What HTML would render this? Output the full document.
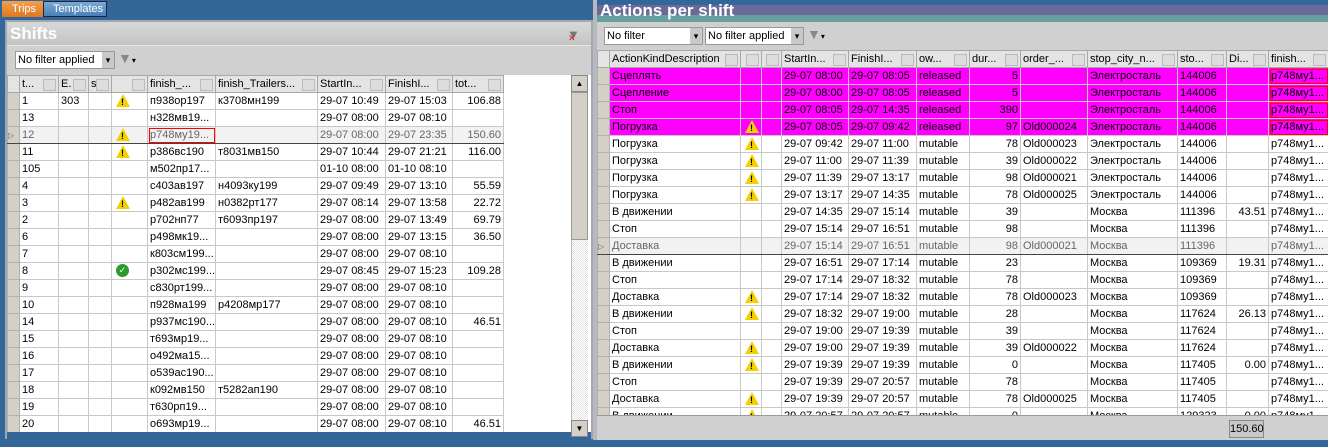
<!DOCTYPE html>
<html><head><meta charset="utf-8"><style>
*{box-sizing:border-box;margin:0;padding:0}
body{width:1328px;height:447px;overflow:hidden;background:#336699;font-family:"Liberation Sans","DejaVu Sans",sans-serif;font-size:11px;color:#000;position:relative}
.abs{position:absolute}
table{border-collapse:collapse;table-layout:fixed;position:absolute;background:#fff}
td{height:17px;border:1px solid #c8c8c8;padding:0 2px;white-space:nowrap;overflow:hidden;font-size:11px;line-height:15px}
td.rh{background:#d4d0c8;border-color:#b0b0b0}
tr.h td{background:#e4e4e4;border-color:#a8a8a8;color:#000;position:relative}
tr.h td.c::after{content:"";position:absolute;right:2px;top:3px;width:11px;height:10px;background:#ddd;border:1px solid #bbb}
.r{text-align:right}
.m td{background:#ff00ff}
.m td.rh{background:#d4d0c8}
.sel td{background:#f2f2f2;color:#666;border-top:1px solid #444;border-bottom:1px solid #444}
.sel td.rh{background:#d4d0c8}
.w{display:inline-block;width:0;height:0;border-left:7px solid transparent;border-right:7px solid transparent;border-bottom:13px solid #f5d000;position:relative;margin-left:2px;vertical-align:middle}
.w::after{content:"!";position:absolute;left:-2px;top:1px;font-size:9px;font-weight:bold;color:#000}
.ok{display:inline-block;width:13px;height:13px;border-radius:50%;background:#2c9a2c;color:#fff;font-size:9px;text-align:center;line-height:13px;margin-left:2px;vertical-align:middle}
.redb{outline:1px solid #f00;outline-offset:-2px}
.fb{position:absolute;height:18px;background:#fff;border:1px solid #999;font-size:11px;line-height:16px;padding-left:2px}
.fb::after{content:"▾";position:absolute;right:0;top:0;width:12px;height:16px;background:#c8c8c8;text-align:center;font-size:9px}
</style></head><body>
<!-- tabs -->
<div class="abs" style="left:2px;top:1px;width:41px;height:16px;background:linear-gradient(#f0a050,#e07820);color:#fff;padding:2px 0 0 10px">Trips</div>
<div class="abs" style="left:43px;top:1px;width:64px;height:16px;background:linear-gradient(#7aa8d0,#4a80b8);color:#fff;border:1px solid #224;padding:1px 0 0 9px">Templates</div>
<!-- left panel -->
<div class="abs" style="left:5px;top:20px;width:588px;height:419px;background:#d0d0d0;border:2px solid #a0a8b0"></div>
<div class="abs" style="left:7px;top:22px;width:584px;height:24px;background:linear-gradient(#d8d8d8,#c4c4c4);color:#fff;font-weight:bold;font-size:17px;padding:2px 0 0 3px;border-bottom:1px solid #e8e8e8">Shifts</div>
<div class="abs" style="left:567px;top:27px;color:#777;font-size:13px">▼<span style="color:#e02020;font-size:9px;position:absolute;left:1px;top:6px">✕</span></div>
<div class="fb" style="left:15px;top:51px;width:100px">No filter applied</div>
<div class="abs" style="left:118px;top:50px;color:#888;font-size:14px">▼<span style="font-size:8px;color:#000">▾</span></div>
<div class="abs" style="left:7px;top:75px;width:584px;height:362px;background:#fff"></div>
<table style="left:7px;top:75px;width:496px">
<colgroup><col style="width:12px"><col style="width:39px"><col style="width:30px"><col style="width:23px"><col style="width:36px"><col style="width:68px"><col style="width:102px"><col style="width:68px"><col style="width:67px"><col style="width:51px"></colgroup>
<tr class="h"><td class="rh"></td><td class="c">t...</td><td class="c">E.</td><td class="c">s...</td><td class="c"></td><td class="c">finish_...</td><td class="c">finish_Trailers...</td><td class="c">StartIn...</td><td class="c">FinishI...</td><td class="c">tot...</td></tr>
<tr><td class="rh"></td><td>1</td><td>303</td><td></td><td><span class="w"></span></td><td>п938ор197</td><td>к3708мн199</td><td>29-07 10:49</td><td>29-07 15:03</td><td class="r">106.88</td></tr>
<tr><td class="rh"></td><td>13</td><td></td><td></td><td></td><td>н328мв19...</td><td></td><td>29-07 08:00</td><td>29-07 08:10</td><td></td></tr>
<tr class="sel"><td class="rh" style="font-size:8px;padding:0">▷</td><td>12</td><td></td><td></td><td><span class="w"></span></td><td class="redb">р748му19...</td><td></td><td>29-07 08:00</td><td>29-07 23:35</td><td class="r">150.60</td></tr>
<tr><td class="rh"></td><td>11</td><td></td><td></td><td><span class="w"></span></td><td>р386вс190</td><td>т8031мв150</td><td>29-07 10:44</td><td>29-07 21:21</td><td class="r">116.00</td></tr>
<tr><td class="rh"></td><td>105</td><td></td><td></td><td></td><td>м502пр17...</td><td></td><td>01-10 08:00</td><td>01-10 08:10</td><td></td></tr>
<tr><td class="rh"></td><td>4</td><td></td><td></td><td></td><td>с403ав197</td><td>н4093ку199</td><td>29-07 09:49</td><td>29-07 13:10</td><td class="r">55.59</td></tr>
<tr><td class="rh"></td><td>3</td><td></td><td></td><td><span class="w"></span></td><td>р482ав199</td><td>н0382рт177</td><td>29-07 08:14</td><td>29-07 13:58</td><td class="r">22.72</td></tr>
<tr><td class="rh"></td><td>2</td><td></td><td></td><td></td><td>р702нп77</td><td>т6093пр197</td><td>29-07 08:00</td><td>29-07 13:49</td><td class="r">69.79</td></tr>
<tr><td class="rh"></td><td>6</td><td></td><td></td><td></td><td>р498мк19...</td><td></td><td>29-07 08:00</td><td>29-07 13:15</td><td class="r">36.50</td></tr>
<tr><td class="rh"></td><td>7</td><td></td><td></td><td></td><td>к803см199...</td><td></td><td>29-07 08:00</td><td>29-07 08:10</td><td></td></tr>
<tr><td class="rh"></td><td>8</td><td></td><td></td><td><span class="ok">✓</span></td><td>р302мс199...</td><td></td><td>29-07 08:45</td><td>29-07 15:23</td><td class="r">109.28</td></tr>
<tr><td class="rh"></td><td>9</td><td></td><td></td><td></td><td>с830рт199...</td><td></td><td>29-07 08:00</td><td>29-07 08:10</td><td></td></tr>
<tr><td class="rh"></td><td>10</td><td></td><td></td><td></td><td>п928ма199</td><td>р4208мр177</td><td>29-07 08:00</td><td>29-07 08:10</td><td></td></tr>
<tr><td class="rh"></td><td>14</td><td></td><td></td><td></td><td>р937мс190...</td><td></td><td>29-07 08:00</td><td>29-07 08:10</td><td class="r">46.51</td></tr>
<tr><td class="rh"></td><td>15</td><td></td><td></td><td></td><td>т693мр19...</td><td></td><td>29-07 08:00</td><td>29-07 08:10</td><td></td></tr>
<tr><td class="rh"></td><td>16</td><td></td><td></td><td></td><td>о492ма15...</td><td></td><td>29-07 08:00</td><td>29-07 08:10</td><td></td></tr>
<tr><td class="rh"></td><td>17</td><td></td><td></td><td></td><td>о539ас190...</td><td></td><td>29-07 08:00</td><td>29-07 08:10</td><td></td></tr>
<tr><td class="rh"></td><td>18</td><td></td><td></td><td></td><td>к092мв150</td><td>т5282ап190</td><td>29-07 08:00</td><td>29-07 08:10</td><td></td></tr>
<tr><td class="rh"></td><td>19</td><td></td><td></td><td></td><td>т630рп19...</td><td></td><td>29-07 08:00</td><td>29-07 08:10</td><td></td></tr>
<tr><td class="rh"></td><td>20</td><td></td><td></td><td></td><td>о693мр19...</td><td></td><td>29-07 08:00</td><td>29-07 08:10</td><td class="r">46.51</td></tr>
</table>
<div class="abs" style="left:7px;top:432px;width:584px;height:7px;background:#336699"></div>
<div class="abs" style="left:571px;top:75px;width:17px;height:362px;background:repeating-conic-gradient(#e4e4e4 0 25%,#fff 0 50%) 0 0/2px 2px;border-left:1px solid #bbb"></div>
<div class="abs" style="left:571px;top:75px;width:17px;height:17px;background:#d4d0c8;border:1px solid #888;font-size:8px;text-align:center;line-height:15px">▲</div>
<div class="abs" style="left:571px;top:420px;width:17px;height:17px;background:#d4d0c8;border:1px solid #888;font-size:8px;text-align:center;line-height:15px">▼</div>
<div class="abs" style="left:571px;top:92px;width:17px;height:148px;background:#d4d0c8;border:1px solid #999"></div>
<!-- splitter -->
<div class="abs" style="left:593px;top:0;width:4px;height:447px;background:#b8b8c0"></div>
<!-- right panel -->
<div class="abs" style="left:597px;top:0;width:731px;height:447px;background:#d0d0d0"></div>
<div class="abs" style="left:597px;top:0;width:731px;height:5px;background:#336699"></div>
<div class="abs" style="left:597px;top:5px;width:731px;height:10px;background:#6a6a9a"></div>
<div class="abs" style="left:597px;top:15px;width:731px;height:7px;background:#66a0a0"></div>
<div class="abs" style="left:600px;top:1px;color:#fff;font-weight:bold;font-size:17px">Actions per shift</div>
<div class="fb" style="left:604px;top:27px;width:99px">No filter</div>
<div class="fb" style="left:705px;top:27px;width:99px">No filter applied</div>
<div class="abs" style="left:807px;top:26px;color:#888;font-size:14px">▼<span style="font-size:8px;color:#000">▾</span></div>
<table style="left:597px;top:50px;width:731px">
<colgroup><col style="width:12px"><col style="width:131px"><col style="width:21px"><col style="width:20px"><col style="width:67px"><col style="width:68px"><col style="width:53px"><col style="width:51px"><col style="width:67px"><col style="width:90px"><col style="width:49px"><col style="width:42px"><col style="width:60px"></colgroup>
<tr class="h"><td class="rh"></td><td class="c">ActionKindDescription</td><td class="c"></td><td class="c"></td><td class="c">StartIn...</td><td class="c">FinishI...</td><td class="c">ow...</td><td class="c">dur...</td><td class="c">order_...</td><td class="c">stop_city_n...</td><td class="c">sto...</td><td class="c">Di...</td><td class="c">finish...</td></tr>
<tr class="m"><td class="rh"></td><td>Сцеплять</td><td></td><td></td><td>29-07 08:00</td><td>29-07 08:05</td><td>released</td><td class="r">5</td><td></td><td>Электросталь</td><td>144006</td><td></td><td class="redb">р748му1...</td></tr>
<tr class="m"><td class="rh"></td><td>Сцепление</td><td></td><td></td><td>29-07 08:00</td><td>29-07 08:05</td><td>released</td><td class="r">5</td><td></td><td>Электросталь</td><td>144006</td><td></td><td class="redb">р748му1...</td></tr>
<tr class="m"><td class="rh"></td><td>Стоп</td><td></td><td></td><td>29-07 08:05</td><td>29-07 14:35</td><td>released</td><td class="r">390</td><td></td><td>Электросталь</td><td>144006</td><td></td><td class="redb">р748му1...</td></tr>
<tr class="m"><td class="rh"></td><td>Погрузка</td><td><span class="w"></span></td><td></td><td>29-07 08:05</td><td>29-07 09:42</td><td>released</td><td class="r">97</td><td>Old000024</td><td>Электросталь</td><td>144006</td><td></td><td class="redb">р748му1...</td></tr>
<tr><td class="rh"></td><td>Погрузка</td><td><span class="w"></span></td><td></td><td>29-07 09:42</td><td>29-07 11:00</td><td>mutable</td><td class="r">78</td><td>Old000023</td><td>Электросталь</td><td>144006</td><td></td><td>р748му1...</td></tr>
<tr><td class="rh"></td><td>Погрузка</td><td><span class="w"></span></td><td></td><td>29-07 11:00</td><td>29-07 11:39</td><td>mutable</td><td class="r">39</td><td>Old000022</td><td>Электросталь</td><td>144006</td><td></td><td>р748му1...</td></tr>
<tr><td class="rh"></td><td>Погрузка</td><td><span class="w"></span></td><td></td><td>29-07 11:39</td><td>29-07 13:17</td><td>mutable</td><td class="r">98</td><td>Old000021</td><td>Электросталь</td><td>144006</td><td></td><td>р748му1...</td></tr>
<tr><td class="rh"></td><td>Погрузка</td><td><span class="w"></span></td><td></td><td>29-07 13:17</td><td>29-07 14:35</td><td>mutable</td><td class="r">78</td><td>Old000025</td><td>Электросталь</td><td>144006</td><td></td><td>р748му1...</td></tr>
<tr><td class="rh"></td><td>В движении</td><td></td><td></td><td>29-07 14:35</td><td>29-07 15:14</td><td>mutable</td><td class="r">39</td><td></td><td>Москва</td><td>111396</td><td class="r">43.51</td><td>р748му1...</td></tr>
<tr><td class="rh"></td><td>Стоп</td><td></td><td></td><td>29-07 15:14</td><td>29-07 16:51</td><td>mutable</td><td class="r">98</td><td></td><td>Москва</td><td>111396</td><td></td><td>р748му1...</td></tr>
<tr class="sel"><td class="rh" style="font-size:8px;padding:0">▷</td><td>Доставка</td><td></td><td></td><td>29-07 15:14</td><td>29-07 16:51</td><td>mutable</td><td class="r">98</td><td>Old000021</td><td>Москва</td><td>111396</td><td></td><td>р748му1...</td></tr>
<tr><td class="rh"></td><td>В движении</td><td></td><td></td><td>29-07 16:51</td><td>29-07 17:14</td><td>mutable</td><td class="r">23</td><td></td><td>Москва</td><td>109369</td><td class="r">19.31</td><td>р748му1...</td></tr>
<tr><td class="rh"></td><td>Стоп</td><td></td><td></td><td>29-07 17:14</td><td>29-07 18:32</td><td>mutable</td><td class="r">78</td><td></td><td>Москва</td><td>109369</td><td></td><td>р748му1...</td></tr>
<tr><td class="rh"></td><td>Доставка</td><td><span class="w"></span></td><td></td><td>29-07 17:14</td><td>29-07 18:32</td><td>mutable</td><td class="r">78</td><td>Old000023</td><td>Москва</td><td>109369</td><td></td><td>р748му1...</td></tr>
<tr><td class="rh"></td><td>В движении</td><td><span class="w"></span></td><td></td><td>29-07 18:32</td><td>29-07 19:00</td><td>mutable</td><td class="r">28</td><td></td><td>Москва</td><td>117624</td><td class="r">26.13</td><td>р748му1...</td></tr>
<tr><td class="rh"></td><td>Стоп</td><td></td><td></td><td>29-07 19:00</td><td>29-07 19:39</td><td>mutable</td><td class="r">39</td><td></td><td>Москва</td><td>117624</td><td></td><td>р748му1...</td></tr>
<tr><td class="rh"></td><td>Доставка</td><td><span class="w"></span></td><td></td><td>29-07 19:00</td><td>29-07 19:39</td><td>mutable</td><td class="r">39</td><td>Old000022</td><td>Москва</td><td>117624</td><td></td><td>р748му1...</td></tr>
<tr><td class="rh"></td><td>В движении</td><td><span class="w"></span></td><td></td><td>29-07 19:39</td><td>29-07 19:39</td><td>mutable</td><td class="r">0</td><td></td><td>Москва</td><td>117405</td><td class="r">0.00</td><td>р748му1...</td></tr>
<tr><td class="rh"></td><td>Стоп</td><td></td><td></td><td>29-07 19:39</td><td>29-07 20:57</td><td>mutable</td><td class="r">78</td><td></td><td>Москва</td><td>117405</td><td></td><td>р748му1...</td></tr>
<tr><td class="rh"></td><td>Доставка</td><td><span class="w"></span></td><td></td><td>29-07 19:39</td><td>29-07 20:57</td><td>mutable</td><td class="r">78</td><td>Old000025</td><td>Москва</td><td>117405</td><td></td><td>р748му1...</td></tr>
<tr><td class="rh"></td><td>В движении</td><td><span class="w"></span></td><td></td><td>29-07 20:57</td><td>29-07 20:57</td><td>mutable</td><td class="r">0</td><td></td><td>Москва</td><td>129323</td><td class="r">0.00</td><td>р748му1...</td></tr>
</table>
<div class="abs" style="left:597px;top:415px;width:731px;height:25px;background:#d0d0d0;border-top:1px solid #999"></div>
<div class="abs" style="left:1229px;top:420px;width:35px;height:18px;border:1px solid #888;background:#c8c8c8;text-align:center;line-height:16px">150.60</div>
<div class="abs" style="left:597px;top:440px;width:731px;height:7px;background:#336699"></div>
<div class="abs" style="left:0;top:440px;width:597px;height:7px;background:#336699"></div>
</body></html>
